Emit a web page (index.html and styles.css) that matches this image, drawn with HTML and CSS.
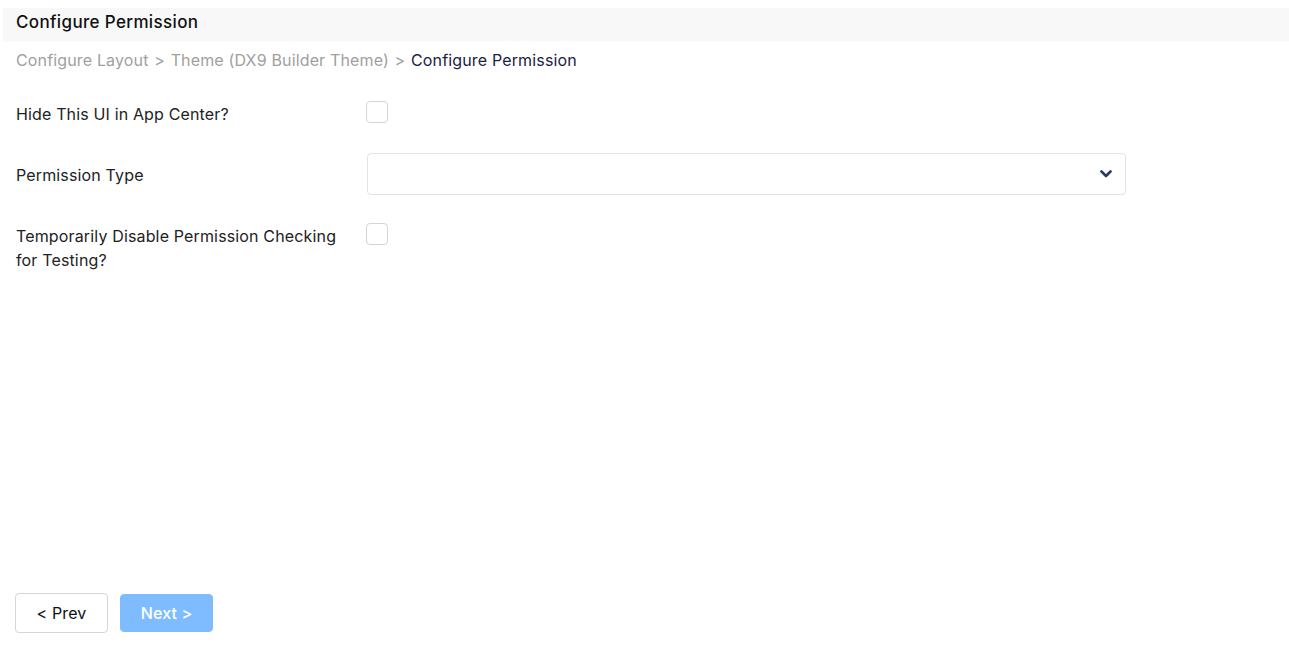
FILE: index.html
```html
<!DOCTYPE html>
<html lang="en">
<head>
  <meta charset="UTF-8">
  <meta name="viewport" content="width=device-width, initial-scale=1">
  <title>Configure Permission</title>
  <link rel="stylesheet" href="styles.css">
</head>
<body>
  <div class="page">
    <!-- Title bar -->
    <div class="title-bar">Configure Permission</div>
    <div class="content">
      <div class="breadcrumb">
        <span class="crumb">Configure Layout</span>
        <span class="sep">&gt;</span>
        <span class="crumb">Theme (DX9 Builder Theme)</span>
        <span class="sep">&gt;</span>
        <span class="crumb current">Configure Permission</span>
      </div>
      <!-- Form -->
      <div class="form">
        <div class="form-row row-hide">
          <label class="form-label" for="hide-ui">Hide This UI in App Center?</label>
          <div class="form-field"><input type="checkbox" id="hide-ui" class="checkbox"></div>
        </div>
        <div class="form-row row-type">
          <label class="form-label" for="perm-type">Permission Type</label>
          <div class="form-field">
            <div class="select" id="perm-type">
              <svg class="select-arrow" width="12" height="8" viewBox="0 0 12 8"><path d="M1.5 1.5 L6 6 L10.5 1.5" fill="none" stroke="#283a66" stroke-width="2.6" stroke-linecap="round" stroke-linejoin="round"/></svg>
            </div>
          </div>
        </div>
        <div class="form-row row-disable">
          <label class="form-label" for="disable-check">Temporarily Disable Permission Checking for Testing?</label>
          <div class="form-field"><input type="checkbox" id="disable-check" class="checkbox"></div>
        </div>
      </div>
    </div>
    <!-- Wizard buttons -->
    <div class="actions">
      <button class="btn btn-prev">&lt; Prev</button>
      <button class="btn btn-next">Next &gt;</button>
    </div>
  </div>
</body>
</html>
```

FILE: styles.css
```css
body {
  font-family: Inter, "Liberation Sans", sans-serif;
  font-size: 16px;
  letter-spacing: 0.15px;
  color: #1f1f1f;
  background-color: #fff;
  margin: 0;
  padding: 0;
}
.page {
  height: 653px;
  display: flex;
  flex-direction: column;
  padding: 8px 0 0 3px;
  box-sizing: border-box;
}
.title-bar {
  background-color: #f8f8f8;
  height: 33px;
  line-height: 28px;
  padding-left: 13px;
  font-size: 17px;
  font-weight: 500;
  letter-spacing: 0.35px;
  color: #111;
}
.content {
  flex: 1;
  padding-left: 13px;
}
.breadcrumb {
  margin-top: 8px;
  line-height: 22px;
  color: #a0a0a0;
}
.breadcrumb .sep {
  margin: 0 1px;
}
.breadcrumb .current {
  color: #1b2145;
}
.form {
  margin-top: 30px;
}
.form-row {
  display: flex;
  align-items: flex-start;
}
.form-label {
  width: 351px;
  line-height: 24px;
  color: #222;
  padding-right: 20px;
  box-sizing: border-box;
}
.form-field {
  flex: none;
  margin-left: -1px;
}
.checkbox {
  appearance: none;
  -webkit-appearance: none;
  width: 22px;
  height: 22px;
  margin: 0;
  border: 1px solid #d0d4dc;
  border-radius: 4px;
  background: #fff;
  display: block;
}
.row-hide .form-label {
  padding-top: 1px;
}
.row-type {
  margin-top: 27px;
  align-items: center;
}
.row-type .form-label {
  padding-top: 1px;
}
.row-type .form-field {
  margin-left: 0;
}
.select {
  width: 759px;
  height: 42px;
  border: 1px solid #e3e3e3;
  border-radius: 4px;
  box-sizing: border-box;
  display: flex;
  align-items: center;
  justify-content: flex-end;
  padding-right: 13px;
}
.row-disable {
  margin-top: 29px;
}
.row-disable .form-field {
  margin-top: -1px;
}
.actions {
  display: flex;
  gap: 12px;
  padding: 0 0 20px 12px;
  align-items: center;
}
.btn {
  font-family: Inter, "Liberation Sans", sans-serif;
  font-size: 16px;
  letter-spacing: 0.15px;
  width: 93px;
  height: 40px;
  border-radius: 4px;
  cursor: pointer;
}
.btn-prev {
  background-color: #fff;
  border: 1px solid #d6d6d6;
  color: #111;
}
.btn-next {
  background-color: #7fbcff;
  border: 1px solid #7fbcff;
  color: #fff;
  font-weight: 500;
  height: 38px;
}
```
